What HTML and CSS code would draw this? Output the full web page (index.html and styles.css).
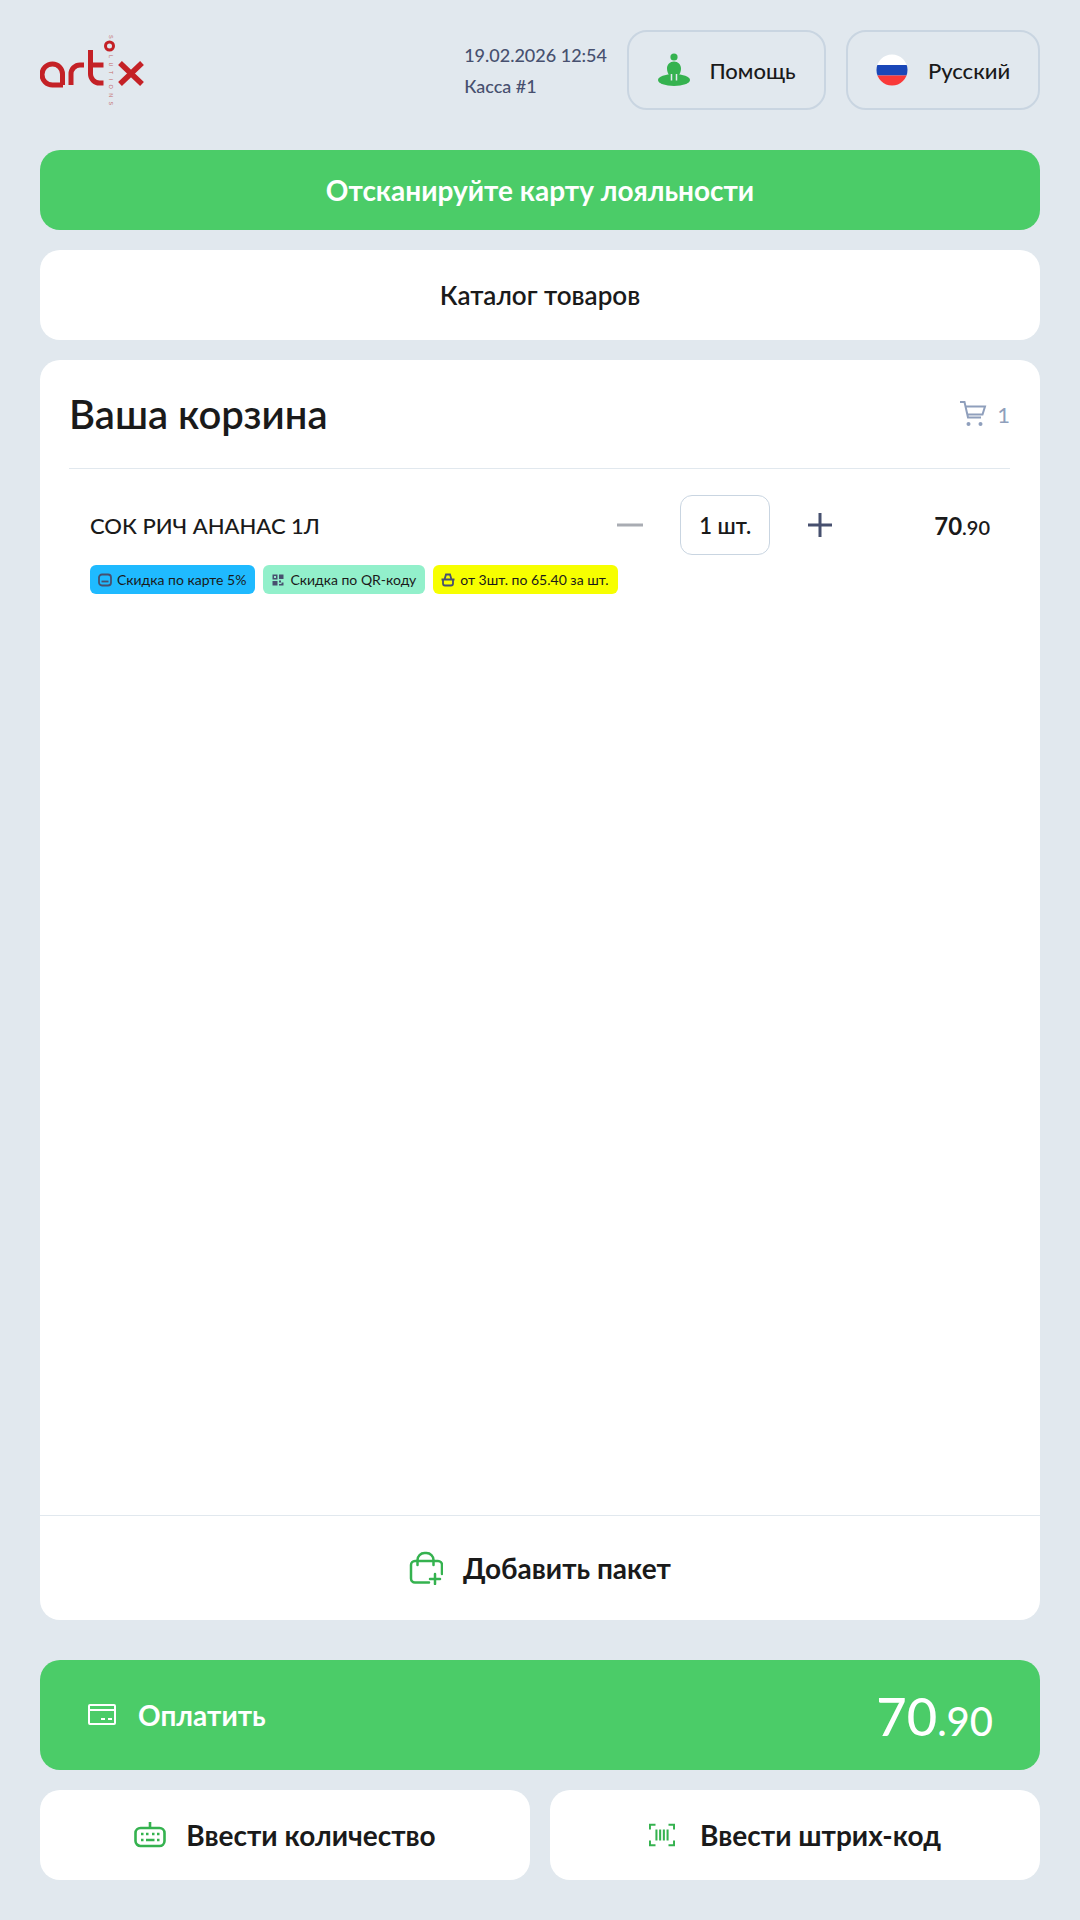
FILE: index.html
```html
<!DOCTYPE html>
<html lang="ru">
  <head>
    <meta charset="UTF-8" />
    <meta name="viewport" content="width=device-width, initial-scale=1.0" />
    <title>Касса</title>
    <link rel="stylesheet" href="styles.css">
  </head>
  <body>
    <header class="topbar">
      <svg class="logo" viewBox="40 25 106 90" width="106" height="90" fill="none" stroke="#c42126" stroke-width="5">
        <path d="M62.5 85V74a10 10 0 0 0-10-10a10.5 10.5 0 0 0 0 21h10.500" />
        <path d="M71 85V74a9 9 0 0 1 9-9h4" />
        <path d="M90.500 50V74a9 9 0 0 0 9 9h4M90.500 65h13" />
        <path d="M120 63l22 21M142 63l-22 21" stroke-width="5.500" />
        <circle cx="109.500" cy="46" r="4" stroke-width="3" />
        <text class="logo-sub" transform="translate(109 35) rotate(90)">S</text>
        <text class="logo-sub" transform="translate(109 55) rotate(90)">LUTIONS</text>
      </svg>
      <div class="till">
        <div>19.02.2026 12:54</div>
        <div>Касса #1</div>
      </div>
      <button class="top-btn help-btn">
        <svg width="34" height="34" viewBox="0 0 34 34">
          <ellipse cx="17" cy="27" rx="16" ry="6" fill="#35b24f" />
          <circle cx="17" cy="4" r="3.600" fill="#35b24f" />
          <path d="M10 15.500c0-4 3-7 7-7s7 3 7 7c0 3-1 5-2 6.500v7H12v-7c-1-1.500-2-3.500-2-6.500z" fill="#35b24f" />
          <path d="M14.500 21v6.500M19.500 21v6.500" stroke="#e1e8ee" stroke-width="1.500" />
        </svg>
        <span>Помощь</span>
      </button>
      <button class="top-btn lang-btn">
        <svg width="32" height="32" viewBox="0 0 32 32">
          <clipPath id="flag-clip"><circle cx="16" cy="16" r="15.500" /></clipPath>
          <g clip-path="url(#flag-clip)">
            <rect width="32" height="11" fill="#fff" />
            <rect y="11" width="32" height="10.500" fill="#1a47b8" />
            <rect y="21.500" width="32" height="10.500" fill="#f93939" />
          </g>
        </svg>
        <span>Русский</span>
      </button>
    </header>

    <div class="loyalty">Отсканируйте карту лояльности</div>
    <div class="catalog">Каталог товаров</div>

    <section class="cart">
      <div class="cart-head">
        <h1>Ваша корзина</h1>
        <div class="cart-count">
          <svg width="28" height="28" viewBox="0 0 28 28" fill="none" stroke="#8f9fbc" stroke-width="2">
            <path d="M1 2h4.500l3.500 15.500h13M7 6.500h19l-2.500 8H9" />
            <circle cx="9.500" cy="24" r="2" fill="#8f9fbc" stroke="none" />
            <circle cx="21.500" cy="24" r="2" fill="#8f9fbc" stroke="none" />
          </svg>
          <span>1</span>
        </div>
      </div>

      <div class="cart-body">
        <div class="item">
          <div class="item-name">СОК РИЧ АНАНАС 1Л</div>
          <div class="stepper">
            <svg width="26" height="26" viewBox="0 0 26 26"><path d="M0 13h26" stroke="#a9acb3" stroke-width="3" /></svg>
            <div class="qty">1 шт.</div>
            <svg width="26" height="26" viewBox="0 0 26 26"><path d="M1 13h24M13 1v24" stroke="#47506f" stroke-width="3" /></svg>
          </div>
          <div class="item-price">70<small>.90</small></div>
        </div>
        <div class="tags">
          <span class="tag tag-card">
            <svg width="14" height="14" viewBox="0 0 14 14" fill="none" stroke="#47506f" stroke-width="1.800"><rect x="1" y="1.500" width="12" height="11" rx="3" /><path d="M3.500 8.500h7" /></svg>
            Скидка по карте 5%
          </span>
          <span class="tag tag-qr">
            <svg width="14" height="14" viewBox="0 0 14 14" fill="#47506f"><path d="M1.500 1.500h5v5h-5zM3 3v2h2V3zM8 1.500h4.500v4.500H8zM1.500 8h5v4.500h-5zM8 7.500h2v2H8zM10.500 9.500h2v3H8V11h2.500z" fill-rule="evenodd" /></svg>
            Скидка по QR-коду
          </span>
          <span class="tag tag-basket">
            <svg width="14" height="14" viewBox="0 0 14 14" fill="none" stroke="#47506f" stroke-width="1.800"><path d="M3.500 6.500L5 1.500h4l1.500 5M.5 6.500h13M2 6.500v4a2 2 0 0 0 2 2h6a2 2 0 0 0 2-2v-4" /></svg>
            от 3шт. по 65.40 за шт.
          </span>
        </div>
      </div>

      <div class="cart-foot">
        <svg width="34" height="34" viewBox="0 0 34 34" fill="none" stroke="#35b24f" stroke-width="2.500" stroke-linecap="round">
          <path d="M20 31.500H6a4 4 0 0 1-4-4V14a4 4 0 0 1 4-4h23a4 4 0 0 1 4 4v9" />
          <path d="M8.500 14V9a7 7 0 0 1 7-7h2a7 7 0 0 1 7 7v5" />
          <path d="M26 23v10M21 28h10" />
        </svg>
        <span>Добавить пакет</span>
      </div>
    </section>

    <div class="pay">
      <div class="pay-label">
        <svg width="28" height="22" viewBox="0 0 28 22" fill="none" stroke="#fff" stroke-width="2">
          <rect x="1" y="1" width="26" height="19" rx="1" />
          <path d="M1 6h26M13 15h4M20 15h4" />
        </svg>
        <span>Оплатить</span>
      </div>
      <div class="pay-sum">70<small>.90</small></div>
    </div>

    <div class="bottom-row">
      <div class="bottom-btn qty-btn">
        <svg width="32" height="26" viewBox="0 0 32 26" fill="none" stroke="#35b24f" stroke-width="2.600">
          <rect x="1.500" y="6" width="29" height="18" rx="5" />
          <path d="M16 0v6M7 12h2.500M12 12h2.500M18 12h2.500M23 12h2.500M7 18h2.500M12 18h8.500M23 18h2.500" />
        </svg>
        <span>Ввести количество</span>
      </div>
      <div class="bottom-btn">
        <svg width="26" height="24" viewBox="0 0 28 24" fill="none" stroke="#35b24f" stroke-width="2.200">
          <path d="M1 6V1h6M21 1h6v5M1 18v5h6M21 23h6v-5" />
          <path d="M8 6v12M12 6v12M16 6v12M20 6v12" />
        </svg>
        <span>Ввести штрих-код</span>
      </div>
    </div>
  </body>
</html>
```

FILE: styles.css
```css
* {
  box-sizing: border-box;
}

html,
body {
  height: 100%;
}

body {
  margin: 0;
  padding: 30px 40px 40px;
  display: flex;
  flex-direction: column;
  background: #e1e8ee;
  color: #1a1a1a;
  font-family: Lato, "Noto Sans", sans-serif;
}

.topbar {
  display: flex;
  align-items: center;
  height: 80px;
  margin-bottom: 40px;
}

.logo {
  display: block;
  margin-right: auto;
}

.logo-sub {
  fill: #c4686c;
  stroke: none;
  font-family: "Liberation Sans", sans-serif;
  font-size: 5.500px;
  letter-spacing: 4.400px;
}

.till {
  display: flex;
  flex-direction: column;
  gap: 9px;
  margin-right: 20px;
  color: #47506f;
  font-size: 18px;
  font-weight: 500;
  line-height: 22px;
}

.top-btn {
  display: flex;
  align-items: center;
  justify-content: center;
  height: 80px;
  border: 2px solid #c9d5e1;
  border-radius: 20px;
  background: none;
  color: inherit;
  font-family: inherit;
  font-size: 22px;
  font-weight: 500;
}

.help-btn {
  gap: 18px;
  width: 199px;
  margin-right: 20px;
}

.lang-btn {
  gap: 20px;
  width: 194px;
}

.loyalty {
  display: flex;
  align-items: center;
  justify-content: center;
  flex: none;
  height: 80px;
  margin-bottom: 20px;
  border-radius: 20px;
  background: #4bcc68;
  color: #fff;
  font-size: 28px;
  font-weight: 700;
}

.catalog {
  display: flex;
  align-items: center;
  justify-content: center;
  flex: none;
  height: 90px;
  margin-bottom: 20px;
  border-radius: 20px;
  background: #fff;
  font-size: 26px;
  font-weight: 600;
}

.cart {
  display: flex;
  flex-direction: column;
  flex: 1;
  margin-bottom: 40px;
  border-radius: 20px;
  background: #fff;
}

.cart-head {
  display: flex;
  align-items: center;
  justify-content: space-between;
  height: 109px;
  margin: 0 30px 0 29px;
  border-bottom: 1px solid #e1e8ee;
}

.cart-head h1 {
  margin: 0;
  font-size: 40px;
  font-weight: 600;
}

.cart-count {
  display: flex;
  align-items: center;
  gap: 10px;
  color: #8f9fbc;
  font-size: 22px;
}

.cart-body {
  flex: 1;
  padding: 26px 50px 0;
}

.item {
  display: flex;
  align-items: center;
  height: 60px;
}

.item-name {
  flex: 1;
  font-size: 22px;
  font-weight: 500;
}

.stepper {
  display: flex;
  align-items: center;
  gap: 37px;
  margin-right: 101px;
}

.qty {
  display: flex;
  align-items: center;
  justify-content: center;
  width: 90px;
  height: 60px;
  border: 1px solid #c9d5e1;
  border-radius: 12px;
  font-size: 22px;
  font-weight: 600;
}

.item-price {
  font-size: 24px;
  font-weight: 700;
}

.item-price small {
  font-size: 20px;
  font-weight: 600;
}

.tags {
  display: flex;
  gap: 8px;
  margin-top: 10px;
}

.tag {
  display: flex;
  align-items: center;
  gap: 5px;
  height: 29px;
  padding: 0 9px 0 8px;
  border-radius: 6px;
  font-size: 14px;
}

.tag-card {
  background: #1fbaff;
}

.tag-qr {
  background: #92f0cb;
}

.tag-basket {
  background: #f7ff00;
}

.cart-foot {
  display: flex;
  align-items: center;
  justify-content: center;
  gap: 20px;
  height: 105px;
  border-top: 1px solid #e1e8ee;
  font-size: 28px;
  font-weight: 700;
}

.pay {
  display: flex;
  align-items: center;
  justify-content: space-between;
  flex: none;
  height: 110px;
  margin-bottom: 20px;
  padding: 0 47px 0 48px;
  border-radius: 20px;
  background: #4bcc68;
  color: #fff;
}

.pay-label {
  display: flex;
  align-items: center;
  gap: 22px;
  font-size: 28px;
  font-weight: 700;
}

.pay-sum {
  font-size: 52.500px;
  font-weight: 500;
}

.pay-sum small {
  font-size: 40px;
}

.bottom-row {
  display: grid;
  grid-template-columns: 1fr 1fr;
  gap: 20px;
  flex: none;
}

.bottom-btn {
  display: flex;
  align-items: center;
  justify-content: center;
  gap: 25px;
  height: 90px;
  border-radius: 20px;
  background: #fff;
  font-size: 28px;
  font-weight: 700;
}

.qty-btn {
  gap: 20px;
}
```
